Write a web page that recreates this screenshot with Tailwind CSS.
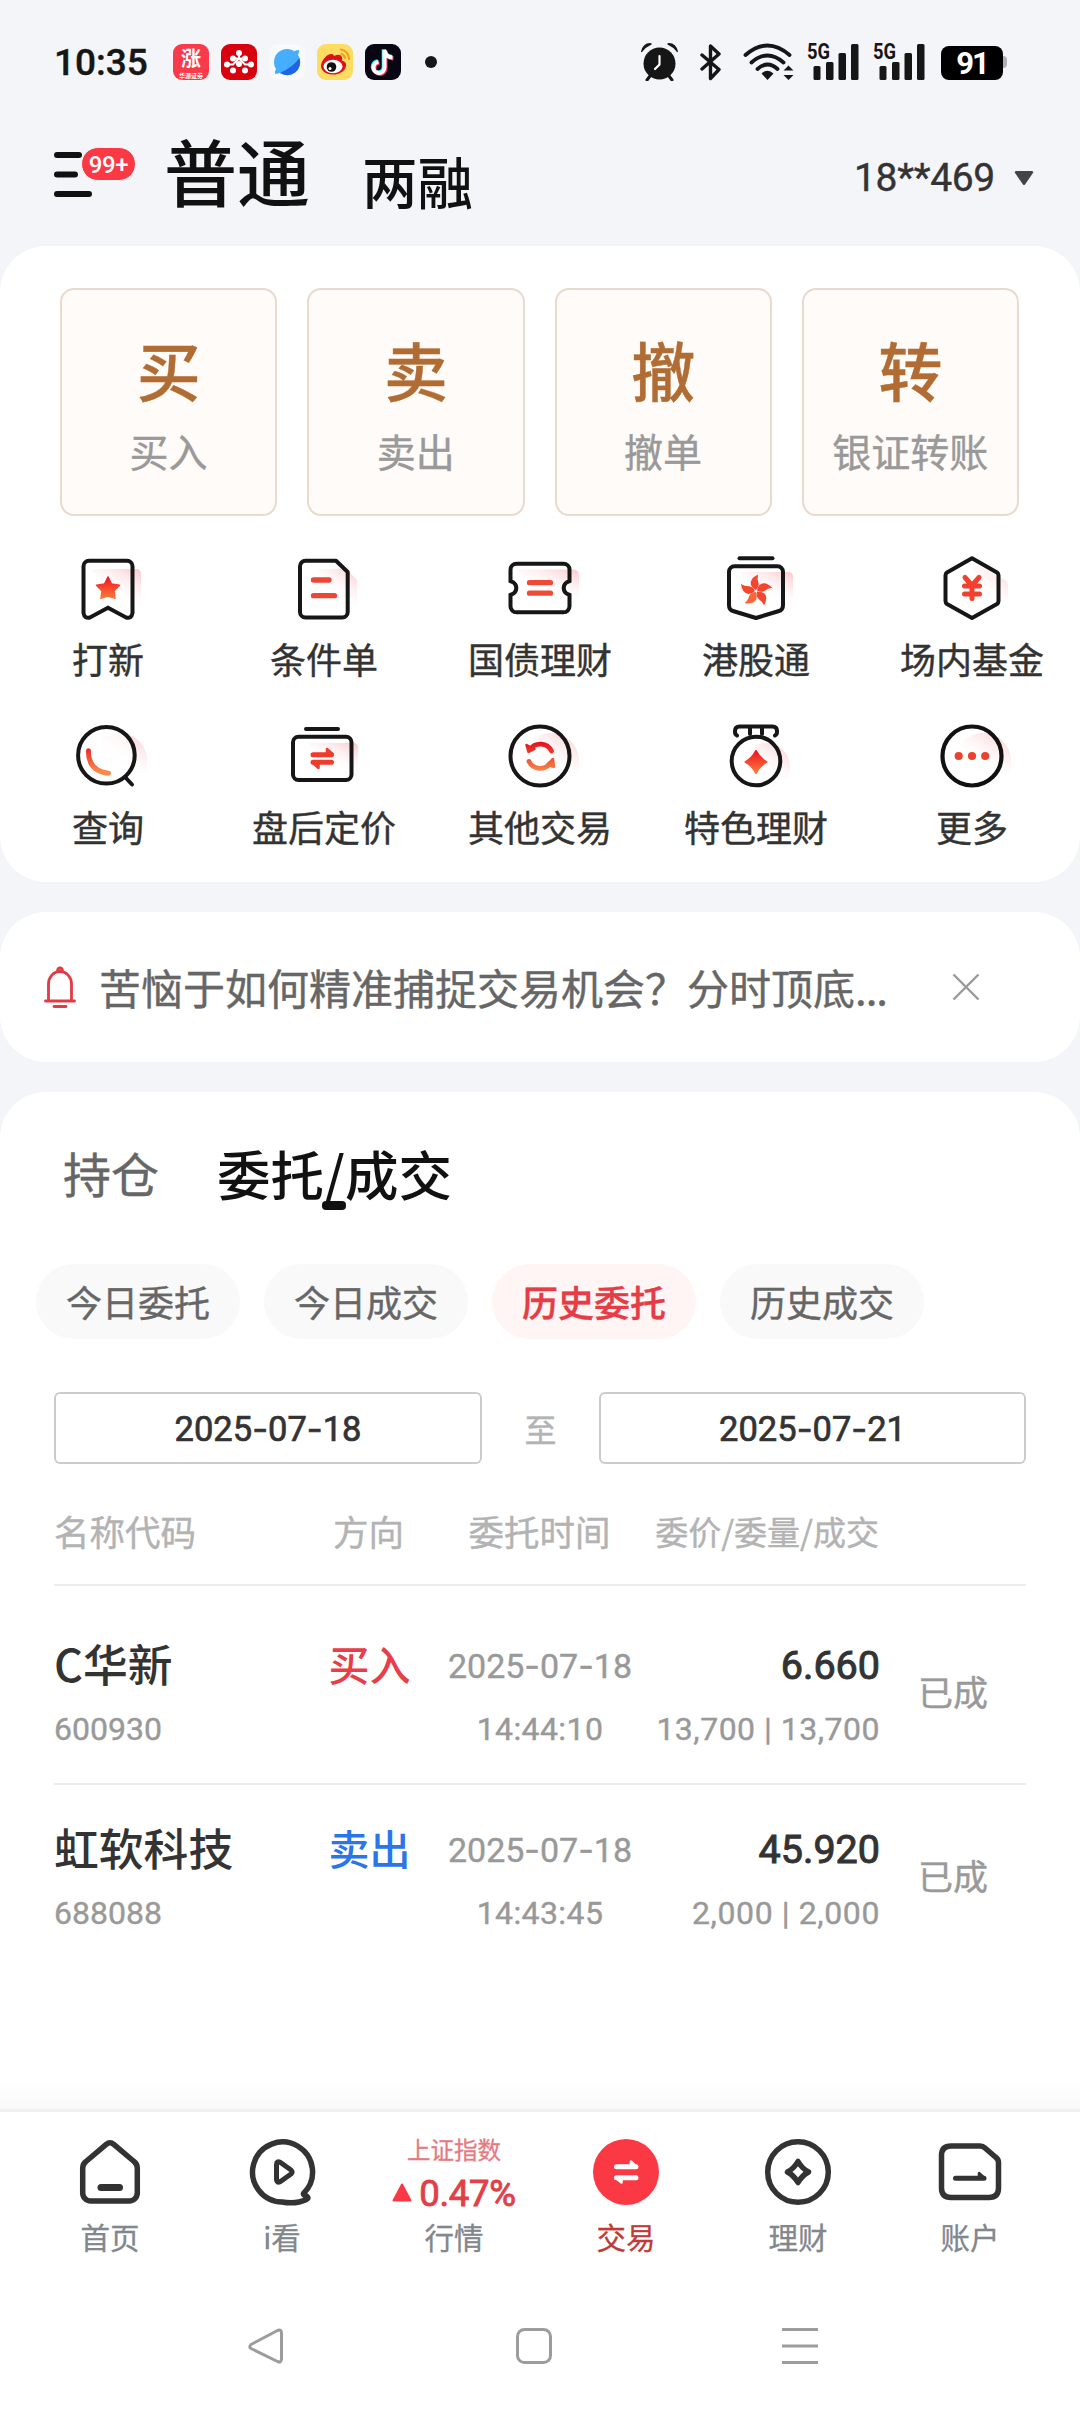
<!DOCTYPE html>
<html lang="zh-CN">
<head>
<meta charset="utf-8">
<title>交易</title>
<script src="https://cdn.jsdelivr.net/npm/@tailwindcss/browser@4"></script>
</head>
<body class="w-[1080px] h-[2412px] overflow-hidden bg-[#f4f5f9] font-['Noto_Sans_CJK_SC',sans-serif] text-[#333]">
<svg class="absolute w-0 h-0" aria-hidden="true">
  <defs>
    <linearGradient id="hot" x1="0" y1="0" x2="0" y2="1"><stop offset="0" stop-color="#ee1520"/><stop offset="1" stop-color="#fb7a3c"/></linearGradient>
    <linearGradient id="arc" gradientUnits="userSpaceOnUse" x1="0" y1="24" x2="0" y2="54"><stop offset="0" stop-color="#e50f1c"/><stop offset="1" stop-color="#f98a4c"/></linearGradient>
    <linearGradient id="pink" x1="1" y1="0" x2=".55" y2=".7"><stop offset="0" stop-color="#fbc4ca"/><stop offset="1" stop-color="#fff" stop-opacity="0"/></linearGradient>
  </defs>
</svg>
<div class="flex flex-col h-full">

  <!-- status bar -->
  <div class="h-[124px] shrink-0 flex items-center pl-[54px] pr-[73px] text-[#161616]">
    <span class="w-[119px] font-['Roboto'] font-medium text-[37px] leading-none [-webkit-text-stroke:.4px]">10:35</span>
    <div class="flex items-center gap-3">
      <div class="size-9 rounded-[9px] bg-[#f93a4b] text-white flex flex-col items-center justify-center">
        <span class="text-[20px] leading-[26px] font-bold">涨</span>
        <span class="text-[6px] leading-[9px] font-bold">华源证券</span>
      </div>
      <svg class="size-9" viewBox="0 0 36 36"><rect width="36" height="36" rx="9" fill="#d8000f"/><g fill="#fff"><circle cx="18" cy="9" r="3"/><circle cx="12" cy="14.500" r="3"/><circle cx="24" cy="14.500" r="3"/><circle cx="18" cy="20" r="3"/><circle cx="6" cy="20.500" r="3"/><circle cx="30" cy="20.500" r="3"/><circle cx="12" cy="26.500" r="3"/><circle cx="24" cy="26.500" r="3"/></g><path d="M6 20.500h6l6-6h0l6 6h6M12 14.500h12M18 9v5" fill="none" stroke="#fff" stroke-width="2"/></svg>
      <svg class="size-9" viewBox="0 0 36 36"><rect width="36" height="36" rx="9" fill="#f8f9fb"/><circle cx="18" cy="18" r="13" fill="#46adff"/><path d="M30.500 14A13 13 0 0 1 11 29Q24 23 30.500 14z" fill="#2163e6"/><path d="M24 8Q31 4 30 8Q29 13 21 21Q11 30 6.500 30Q5 29 7 25" fill="#46adff"/></svg>
      <svg class="size-9" viewBox="0 0 36 36"><rect width="36" height="36" rx="9" fill="#fddc62"/><path d="M4 22C4 16 11 9 15 10Q17 10.500 17 12Q23 9 25 13Q25.500 15 25 16.500Q30 18 29 22C28 28 21 31 15 30.500C9 30 4 27 4 22z" fill="#d8131c"/><ellipse cx="16" cy="22.500" rx="9.500" ry="6.800" fill="#fff"/><circle cx="14.500" cy="23" r="4.800" fill="#111"/><circle cx="13" cy="24.500" r="1.500" fill="#fff"/><path d="M24 5.500A9.500 9.500 0 0 1 32 15M24.500 10A5 5 0 0 1 28 14" fill="none" stroke="#f0a020" stroke-width="2.200" stroke-linecap="round"/></svg>
      <svg class="size-9" viewBox="0 0 36 36"><rect width="36" height="36" rx="9" fill="#080612"/><g fill="none" stroke-width="4"><path d="M19.500 6v17.500a5.500 5.500 0 1 1-6-5.500M19.500 6q1 7 8 7.500" stroke="#2cebe6" transform="translate(-.8 -.8)"/><path d="M19.500 6v17.500a5.500 5.500 0 1 1-6-5.500M19.500 6q1 7 8 7.500" stroke="#fb3058" transform="translate(1 1)"/><path d="M19.500 6v17.500a5.500 5.500 0 1 1-6-5.500M19.500 6q1 7 8 7.500" stroke="#fff"/></g></svg>
    </div>
    <span class="size-3 rounded-full bg-[#161616] ml-6"></span>
    <svg class="ml-auto w-[37px] h-[38px]" viewBox="0 0 37 38"><circle cx="18.500" cy="20.500" r="16" fill="#161616"/><path d="M9 33l-3 4M28 33l3 4" stroke="#161616" stroke-width="3" stroke-linecap="round"/><path d="M0 8.500Q2 0 9 0Q11.500 0 10.500 1.500Q5 4 1.500 8.500Q.5 10 0 8.500zM37 8.500Q35 0 28 0Q25.500 0 26.500 1.500Q32 4 35.500 8.500Q36.500 10 37 8.500z" fill="#161616"/><path d="M18.500 13v8.500l-4.500 4.500" fill="none" stroke="#fff" stroke-width="2.200" stroke-linecap="round"/></svg>
    <svg class="ml-[22px] w-[21px] h-[38px]" viewBox="0 0 21 38"><path d="M2 12l17 14.500-8.500 9V3L19 11 2 26" fill="none" stroke="#161616" stroke-width="3.400" stroke-linejoin="round" stroke-linecap="round"/></svg>
    <svg class="ml-[22px] w-[51px] h-[38px]" viewBox="0 0 51 38"><g fill="none" stroke="#161616" stroke-width="3.800" stroke-linecap="round"><path d="M2.500 12Q24.500-7 46.500 12"/><path d="M8.500 19.500Q24.500 5.500 40.500 19.500"/><path d="M14.500 26Q24.500 17 34.500 26"/></g><path d="M18.500 30.500Q24.500 25 30.500 30.500L24.500 37zM40.500 27.500l5-5 5 5zM40.500 32l5 5 5-5z" fill="#161616"/></svg>
    <svg class="ml-[13px] w-[52px] h-[38px] overflow-visible" viewBox="0 0 52 38"><text x="0" y="16" font-family="Roboto" font-weight="700" font-size="22" textLength="23" lengthAdjust="spacingAndGlyphs" fill="#161616">5G</text><g fill="#161616"><rect x="6.500" y="23" width="7" height="14" rx="1.500"/><rect x="19" y="19" width="7.500" height="18" rx="1.500"/><rect x="31.500" y="10" width="7.500" height="27" rx="1.500"/><rect x="44" y="1" width="7.500" height="36" rx="1.500"/></g></svg>
    <svg class="ml-[14px] w-[52px] h-[38px] overflow-visible" viewBox="0 0 52 38"><text x="0" y="16" font-family="Roboto" font-weight="700" font-size="22" textLength="23" lengthAdjust="spacingAndGlyphs" fill="#161616">5G</text><g fill="#161616"><rect x="6.500" y="23" width="7" height="14" rx="1.500"/><rect x="19" y="19" width="7.500" height="18" rx="1.500"/><rect x="31.500" y="10" width="7.500" height="27" rx="1.500"/><rect x="44" y="1" width="7.500" height="36" rx="1.500"/></g></svg>
    <div class="ml-4 mt-0.5 w-[62px] h-[34px] rounded-lg bg-black text-white font-['Roboto'] font-bold text-[31px] leading-[35px] tracking-[-2px] text-center">91</div>
    <div class="w-1 h-3 rounded-r-sm bg-[#b0b1b4]"></div>
  </div>

  <!-- account header -->
  <header class="h-[122px] shrink-0 flex pl-[54px] pr-[46px] text-[#111]">
    <div class="relative w-[110px]">
      <svg class="absolute left-0 top-7 w-10 h-12" viewBox="0 0 40 48"><path d="M3 3h22M3 22.500h18M3 42h32" stroke="#111" stroke-width="6" stroke-linecap="round"/></svg>
      <span class="absolute left-[27px] top-[23px] w-[55px] h-[34px] rounded-full bg-[#fa3945] border border-[#f4f5f9] text-white text-center font-['Roboto'] font-medium text-[24px] leading-[34px] tracking-[-.3px]">99+</span>
    </div>
    <span class="text-[73px] leading-[72px] mt-[9px] font-medium">普通</span>
    <span class="text-[55.500px] leading-[56px] mt-[28px] ml-[52px] font-medium">两融</span>
    <span class="ml-auto mt-[34px] font-['Roboto'] text-[39px] leading-[40px] text-[#333] tracking-[-.3px] [-webkit-text-stroke:.4px]">18**469</span>
    <svg class="ml-[19px] mt-[46px] w-[20px] h-4" viewBox="0 0 20 16"><path d="M2 1h16q2 .5.8 2.300L11 14.500q-1 1-2 0L1.200 3.300Q0 1.500 2 1z" fill="#444"/></svg>
  </header>

  <!-- shortcuts -->
  <section class="h-[636px] shrink-0 bg-white rounded-[46px] pt-[42px] [-webkit-text-stroke:.4px]">
    <div class="grid grid-cols-4 gap-[30px] pl-[60px] pr-[61px]">
      <div class="h-[228px] rounded-[14px] border-2 border-[#e8dacd] bg-[#fffbf8] flex flex-col items-center pt-[44px]"><span class="text-[64px] leading-[68px] font-medium text-[#b06c33]">买</span><span class="mt-[20px] text-[39px] leading-[56px] text-[#999]">买入</span></div>
      <div class="h-[228px] rounded-[14px] border-2 border-[#e8dacd] bg-[#fffbf8] flex flex-col items-center pt-[44px]"><span class="text-[64px] leading-[68px] font-medium text-[#b06c33]">卖</span><span class="mt-[20px] text-[39px] leading-[56px] text-[#999]">卖出</span></div>
      <div class="h-[228px] rounded-[14px] border-2 border-[#e8dacd] bg-[#fffbf8] flex flex-col items-center pt-[44px]"><span class="text-[64px] leading-[68px] font-medium text-[#b06c33]">撤</span><span class="mt-[20px] text-[39px] leading-[56px] text-[#999]">撤单</span></div>
      <div class="h-[228px] rounded-[14px] border-2 border-[#e8dacd] bg-[#fffbf8] flex flex-col items-center pt-[44px]"><span class="text-[64px] leading-[68px] font-medium text-[#b06c33]">转</span><span class="mt-[20px] text-[39px] leading-[56px] text-[#999]">银证转账</span></div>
    </div>
    <div class="mt-9 grid grid-cols-5 auto-rows-[166px] text-[36px] leading-[48px]">
      <div class="flex flex-col items-center gap-[10px]">
        <svg class="size-[72px] overflow-visible" viewBox="0 0 72 72" fill="none"><path d="M20 17h44q5 0 5 5v40l-20-5z" fill="url(#pink)"/><path d="M17 8.700h38a5.500 5.500 0 0 1 5.500 5.500V61q-1 6-6.500 4.500L36 55.700 18 65.500Q12.500 67 11.500 61V14.200A5.500 5.500 0 0 1 17 8.700z" stroke="#161616" stroke-width="4"/><path d="M36 25l3.500 7 8 1.300-5.600 5.600 1.200 7.500-7.100-2.400-7.100 2.400 1.200-7.500-5.600-5.600 8-1.300z" fill="url(#hot)" stroke="url(#hot)" stroke-width="1.500" stroke-linejoin="round"/></svg>
        <span>打新</span>
      </div>
      <div class="flex flex-col items-center gap-[10px]">
        <svg class="size-[72px] overflow-visible" viewBox="0 0 72 72" fill="none"><path d="M30 17h28l11 11v34l-20-5z" fill="url(#pink)"/><path d="M17.500 8.800H48L59.700 20v40a5.500 5.500 0 0 1-5.500 5.500H17.500A5.500 5.500 0 0 1 12 60V14.300a5.500 5.500 0 0 1 5.500-5.500z" stroke="#161616" stroke-width="4" stroke-linejoin="round"/><path d="M25.500 28H41M25.500 43.700h21" stroke="#ee4634" stroke-width="5.300" stroke-linecap="round"/></svg>
        <span>条件单</span>
      </div>
      <div class="flex flex-col items-center gap-[10px]">
        <svg class="size-[72px] overflow-visible" viewBox="0 0 72 72" fill="none"><path d="M12 17.500h57q6 0 6 6v30l-24-5z" fill="url(#pink)"/><path d="M12.500 11.700h47a6 6 0 0 1 6 6v11.500l-3 1.300a6.800 6.800 0 0 0 0 11l3 1.300v11.500a6 6 0 0 1-6 6h-47a6 6 0 0 1-6-6V42.800l3-1.300a6.800 6.800 0 0 0 0-11l-3-1.300V17.700a6 6 0 0 1 6-6z" stroke="#161616" stroke-width="4"/><path d="M25.500 30.700h21M25.500 41.200h21" stroke="#ef4a36" stroke-width="5.300" stroke-linecap="round"/></svg>
        <span>国债理财</span>
      </div>
      <div class="flex flex-col items-center gap-[10px]">
        <svg class="size-[72px] overflow-visible" viewBox="0 0 72 72" fill="none"><path d="M20 20h48q5 0 5 5v34l-24-5z" fill="url(#pink)"/><path d="M19.500 6.300h33" stroke="#161616" stroke-width="4" stroke-linecap="round"/><path d="M14.500 14.300h43a5.500 5.500 0 0 1 5.500 5.500V53q0 5-4 6L36 66l-23-7q-4-1-4-6V19.800a5.500 5.500 0 0 1 5.500-5.500z" stroke="#161616" stroke-width="4" stroke-linejoin="round"/><g fill="#f4452f"><path id="petal" d="M35.500 38Q28 33 32 27Q34 24.500 38 22.500Q37 27 38.500 31Q39.500 35 35.500 38z"/><use href="#petal" transform="rotate(72 36 39)"/><use href="#petal" transform="rotate(144 36 39)"/><use href="#petal" transform="rotate(216 36 39)" fill="#f8663a"/><use href="#petal" transform="rotate(288 36 39)"/></g></svg>
        <span>港股通</span>
      </div>
      <div class="flex flex-col items-center gap-[10px]">
        <svg class="size-[72px] overflow-visible" viewBox="0 0 72 72" fill="none"><path d="M36 15l8-1 25 14q3 2 3 5v33l-24-6z" fill="url(#pink)"/><path d="M36 6.300l25 14.200q1.500 1 1.500 3V49q0 2-1.500 3L36 66 11 52q-1.500-1-1.500-3V23.500q0-2 1.500-3z" stroke="#161616" stroke-width="4" stroke-linejoin="round"/><path d="M29 25.500l7 8 7-8M28.500 34h15M28.500 42h15M36 34v12.500" stroke="#f2402f" stroke-width="5" stroke-linecap="round" stroke-linejoin="round"/></svg>
        <span>场内基金</span>
      </div>
      <div class="flex flex-col items-center gap-3">
        <svg class="size-[72px] overflow-visible" viewBox="0 0 72 72" fill="none"><circle cx="48" cy="42" r="27" fill="url(#pink)"/><circle cx="34.400" cy="37.300" r="28.300" fill="#fff" fill-opacity=".6" stroke="#161616" stroke-width="4"/><path d="M53 59l7 7.500" stroke="#161616" stroke-width="4" stroke-linecap="round"/><path d="M16.500 32.700Q16 53 36.500 55.300" stroke="url(#arc)" stroke-width="5" stroke-linecap="round"/></svg>
        <span>查询</span>
      </div>
      <div class="flex flex-col items-center gap-3">
        <svg class="size-[72px] overflow-visible" viewBox="0 0 72 72" fill="none"><path d="M20 25h45q5 0 5 5v30l-24-5z" fill="url(#pink)"/><path d="M18 11h32" stroke="#161616" stroke-width="4" stroke-linecap="round"/><rect x="5" y="18.700" width="58.500" height="43.300" rx="5.500" stroke="#161616" stroke-width="4"/><path d="M25 36.700h18.500M25 44.300h18.500" stroke="#ef3b2c" stroke-width="5" stroke-linecap="round"/><path d="M39 31v5h5.500zM30.500 50v-5H25z" fill="#ef3b2c" stroke="#ef3b2c" stroke-width="2.500" stroke-linejoin="round"/></svg>
        <span>盘后定价</span>
      </div>
      <div class="flex flex-col items-center gap-3">
        <svg class="size-[72px] overflow-visible" viewBox="0 0 72 72" fill="none"><circle cx="47" cy="43" r="28" fill="url(#pink)"/><circle cx="36" cy="38" r="29.500" stroke="#161616" stroke-width="4"/><path d="M26 31.500A12.500 12.500 0 0 1 47.500 33M25 43.500A12.500 12.500 0 0 0 46 45.500" stroke="url(#arc)" stroke-width="4.800" stroke-linecap="round"/><path d="M22.500 27l2 7 6-3zM49 41l1 8-6.500-2.500z" fill="url(#arc)" stroke="url(#arc)" stroke-width="2.500" stroke-linejoin="round"/></svg>
        <span>其他交易</span>
      </div>
      <div class="flex flex-col items-center gap-3">
        <svg class="size-[72px] overflow-visible" viewBox="0 0 72 72" fill="none"><circle cx="46" cy="49" r="24" fill="url(#pink)"/><circle cx="36" cy="43" r="24.300" stroke="#161616" stroke-width="4"/><path d="M17 17.500Q15 16.500 15 14v-1q0-4.500 4.500-4.500h33q4.500 0 4.500 4.500v1q0 2.500-2 3.500M30 9v7M42 9v7" stroke="#161616" stroke-width="4" stroke-linecap="round"/><path d="M36 33q3.500 7 10.500 11-7 4-10.500 11-3.500-7-10.500-11 7-4 10.500-11z" fill="url(#hot)" stroke="url(#hot)" stroke-width="2" stroke-linejoin="round"/></svg>
        <span>特色理财</span>
      </div>
      <div class="flex flex-col items-center gap-3">
        <svg class="size-[72px] overflow-visible" viewBox="0 0 72 72" fill="none"><circle cx="47" cy="43" r="28" fill="url(#pink)"/><circle cx="36" cy="38" r="29.500" stroke="#111" stroke-width="4.200"/><g fill="#e9432f"><circle cx="22.700" cy="38" r="4.100"/><circle cx="36" cy="38" r="4.100"/><circle cx="49.200" cy="38" r="4.100"/></g></svg>
        <span>更多</span>
      </div>
    </div>
  </section>

  <!-- notice -->
  <section class="mt-[30px] h-[150px] shrink-0 bg-white rounded-[46px] flex items-center pl-[44px]">
    <svg class="w-8 h-[42px]" viewBox="0 0 32 42" fill="none" stroke="#e23b45" stroke-width="2.800"><path d="M13.500 5.500Q13.500 2 16 2t2.500 3.500M4.500 33.500V18a11.500 12.500 0 0 1 23 0v15.500M1.500 35h29M10 40.500h12" stroke-linecap="round"/></svg>
    <p class="ml-[23px] w-[801px] text-[42px] leading-[60px] text-[#666] whitespace-nowrap [-webkit-text-stroke:.4px]">苦恼于如何精准捕捉交易机会？分时顶底<span class="tracking-[-1px]">...</span></p>
    <svg class="ml-[52px] size-[28px]" viewBox="0 0 28 28"><path d="M1.500 1.500l25 25M26.500 1.500l-25 25" stroke="#999" stroke-width="2.400"/></svg>
  </section>

  <!-- orders -->
  <main class="mt-[30px] flex-1 min-h-0 bg-white rounded-t-[46px] flex flex-col [-webkit-text-stroke:.4px]">
    <div class="h-[172px] shrink-0 flex pl-[63px] pt-[42px]">
      <span class="text-[48px] leading-[76px] text-[#666]">持仓</span>
      <span class="relative ml-[58px] text-[53.500px] leading-[77px] font-medium text-[#111] [-webkit-text-stroke:0]">委托/成交<i class="absolute left-[105px] top-[67px] w-6 h-[9px] rounded-[4px] bg-[#111]"></i></span>
    </div>
    <div class="shrink-0 flex gap-6 px-9 text-[36px] leading-[74px] text-[#666] text-center">
      <span class="w-[204px] h-[75px] rounded-full bg-[#f9f9f9]">今日委托</span>
      <span class="w-[204px] h-[75px] rounded-full bg-[#f9f9f9]">今日成交</span>
      <span class="w-[204px] h-[75px] rounded-full bg-[#fff5f4] text-[#e63c46] font-medium">历史委托</span>
      <span class="w-[204px] h-[75px] rounded-full bg-[#f9f9f9]">历史成交</span>
    </div>
    <div class="mt-[53px] shrink-0 flex items-center px-[54px] text-center">
      <div class="w-[428px] h-[72px] rounded-md border-2 border-[#ccc] font-['Roboto'] text-[34.500px] leading-[70px] [-webkit-text-stroke:.7px]">2025<span class="font-['Inter']">-</span>07<span class="font-['Inter']">-</span>18</div>
      <span class="flex-1 text-[32px] text-[#b3b3b3]">至</span>
      <div class="w-[427px] h-[72px] rounded-md border-2 border-[#ccc] font-['Roboto'] text-[34.500px] leading-[70px] [-webkit-text-stroke:.7px]">2025<span class="font-['Inter']">-</span>07<span class="font-['Inter']">-</span>21</div>
    </div>
    <div class="mx-[54px] h-[122px] shrink-0 border-b-2 border-[#ececec] grid grid-cols-[232px_166px_175px_252px_1fr] pt-[42px] text-[35.500px] leading-[50px] text-[#b3b3b3]">
      <span>名称代码</span><span class="text-center pr-[1px]">方向</span><span class="text-center">委托时间</span><span class="text-right text-[33px]">委价/委量/成交</span>
    </div>
    <div class="mx-[54px] h-[199px] shrink-0 border-b-2 border-[#ececec] grid grid-cols-[232px_166px_176px_252px_1fr] pt-[50px] font-['Roboto','Noto_Sans_CJK_SC']">
      <div class="flex flex-col"><span class="font-['Noto_Sans_CJK_SC'] font-medium text-[44.800px] leading-[54px] [-webkit-text-stroke:0]">C华新</span><span class="mt-[14px] text-[32px] leading-[50px] text-[#999]">600930</span></div>
      <div class="pt-[3px] pl-[1px] text-center font-medium text-[41px] leading-[56px] text-[#e93e49] [-webkit-text-stroke:0]">买入</div>
      <div class="flex flex-col items-center text-[#999] whitespace-nowrap"><span class="text-[34px] leading-[60px]">2025<span class="font-['Inter']">-</span>07<span class="font-['Inter']">-</span>18</span><span class="mt-2 text-[32px] leading-[50px] tracking-[.4px]">14:44:10</span></div>
      <div class="flex flex-col items-end"><span class="text-[39.500px] leading-[60px] [-webkit-text-stroke:1px]">6.660</span><span class="mt-2 text-[32px] leading-[50px] text-[#999] tracking-[.5px]">13,700 | 13,700</span></div>
      <div class="pl-[38px] pt-[31px] text-[35px] leading-[56px] text-[#999]">已成</div>
    </div>
    <div class="mx-[54px] h-[185px] shrink-0 grid grid-cols-[232px_166px_176px_252px_1fr] pt-[35px] font-['Roboto','Noto_Sans_CJK_SC']">
      <div class="flex flex-col"><span class="font-['Noto_Sans_CJK_SC'] font-medium text-[44.800px] leading-[54px] [-webkit-text-stroke:0]">虹软科技</span><span class="mt-[14px] text-[32px] leading-[50px] text-[#999]">688088</span></div>
      <div class="pt-[3px] pl-[1px] text-center font-medium text-[41px] leading-[56px] text-[#2b75ea] [-webkit-text-stroke:0]">卖出</div>
      <div class="flex flex-col items-center text-[#999] whitespace-nowrap"><span class="text-[34px] leading-[60px]">2025<span class="font-['Inter']">-</span>07<span class="font-['Inter']">-</span>18</span><span class="mt-2 text-[32px] leading-[50px] tracking-[.4px]">14:43:45</span></div>
      <div class="flex flex-col items-end"><span class="text-[39.500px] leading-[60px] [-webkit-text-stroke:1px]">45.920</span><span class="mt-2 text-[32px] leading-[50px] text-[#999] tracking-[.6px]">2,000 | 2,000</span></div>
      <div class="pl-[38px] pt-[31px] text-[35px] leading-[56px] text-[#999]">已成</div>
    </div>
    <div class="mt-auto h-7 bg-linear-to-b from-white to-[#f9f9f9]"></div>
  </main>

  <!-- tab bar -->
  <nav class="h-[173px] shrink-0 bg-white border-t-[3px] border-[#efefef] grid grid-cols-6 px-6 pt-6 text-[29.500px] leading-[40px] text-[#82868d] [-webkit-text-stroke:.3px]">
    <div class="flex flex-col items-center gap-2">
      <svg class="size-[72px]" viewBox="0 0 72 72" fill="none" stroke="#333" stroke-width="5.500"><path d="M32.500 8.200a5 5 0 0 1 7 0L60 25.500q3.300 2.500 3.300 6.500v25a8 8 0 0 1-8 8H16.700a8 8 0 0 1-8-8V32q0-4 3.300-6.500z" stroke-linejoin="round"/><path d="M27 51.500h18.500" stroke-width="7" stroke-linecap="round"/></svg>
      <span>首页</span>
    </div>
    <div class="flex flex-col items-center gap-2">
      <svg class="size-[72px]" viewBox="0 0 72 72" fill="none" stroke="#333" stroke-width="5.500" stroke-linejoin="round"><path d="M57.500 57.500A30 30 0 1 0 36 66q14 2.500 24.500-2.500 3-1.500 0-3.500-3.500-1-3-2.500z"/><path d="M30.500 28.500q0-4 4-2L45 34q2 2 0 4l-10.500 7.500q-4 2-4-2z" stroke-width="5"/></svg>
      <span>i看</span>
    </div>
    <div class="flex flex-col items-center">
      <span class="-mt-0.5 text-[23.500px] leading-[30px] text-[#e67a81]">上证指数</span>
      <span class="mt-2 flex items-center font-['Roboto'] text-[36.500px] leading-[44px] text-[#e23f49] tracking-[-.3px] [-webkit-text-stroke:.9px]"><svg class="mr-[7px] -mt-1 w-[20px] h-[19px]" viewBox="0 0 20 19"><path d="M10 1.500L18.500 17.500h-17z" fill="#fb3845" stroke="#fb3845" stroke-width="2" stroke-linejoin="round"/></svg>0.47%</span>
      <span>行情</span>
    </div>
    <div class="flex flex-col items-center gap-2 text-[#c03a36]">
      <svg class="size-[72px]" viewBox="0 0 72 72" fill="none" stroke="#fff" stroke-width="5" stroke-linecap="round" stroke-linejoin="round"><circle cx="36" cy="36" r="33" fill="#fa3945" stroke="none"/><path d="M26.500 30.700H46M26.500 41.700H46"/><path d="M41 25.500v5h5zM31.500 46.500v-4h-5z" stroke-width="2.500" fill="#fff"/></svg>
      <span>交易</span>
    </div>
    <div class="flex flex-col items-center gap-2">
      <svg class="size-[72px]" viewBox="0 0 72 72" fill="none" stroke="#333" stroke-width="5.500"><circle cx="36" cy="36" r="30.300"/><path d="M36 25.500q4 7 10.500 10.500-6.500 3.500-10.500 10.500-4-7-10.500-10.500 6.500-3.500 10.500-10.500z" stroke-linejoin="round"/></svg>
      <span>理财</span>
    </div>
    <div class="flex flex-col items-center gap-2">
      <svg class="size-[72px]" viewBox="0 0 72 72" fill="none" stroke="#333" stroke-width="5.500" stroke-linejoin="round"><path d="M17 10h29q3 0 5 2l11 9.500q2.500 2 2.500 5V52q0 9.500-9.500 9.500H17Q7.500 61.500 7.500 52V19.500Q7.500 10 17 10z"/><path d="M21.500 42.300H50" stroke-width="5" stroke-linecap="round"/><path d="M45 37v4.500h5z" fill="#333" stroke-width="2.500"/></svg>
      <span>账户</span>
    </div>
  </nav>

  <!-- system navigation -->
  <div class="h-[130px] shrink-0 bg-white flex pt-[46px] pl-[248px] gap-[232px]">
    <svg class="size-9" viewBox="0 0 36 36" fill="none" stroke="#9c9c9c" stroke-width="3"><path d="M29.500 2.500q4-1.500 4 2.500v26q0 4-4 2.500L3 20.500q-2.500-1.500 0-4z" stroke-linejoin="round"/></svg>
    <svg class="size-9" viewBox="0 0 36 36" fill="none" stroke="#9c9c9c" stroke-width="3"><rect x="1.500" y="1.500" width="33" height="33" rx="7"/></svg>
    <svg class="size-9 -ml-[2px]" viewBox="0 0 36 36" fill="none" stroke="#9c9c9c" stroke-width="3"><path d="M0 1.500h36M0 18h36M0 34.500h36"/></svg>
  </div>
</div>
</body>
</html>
